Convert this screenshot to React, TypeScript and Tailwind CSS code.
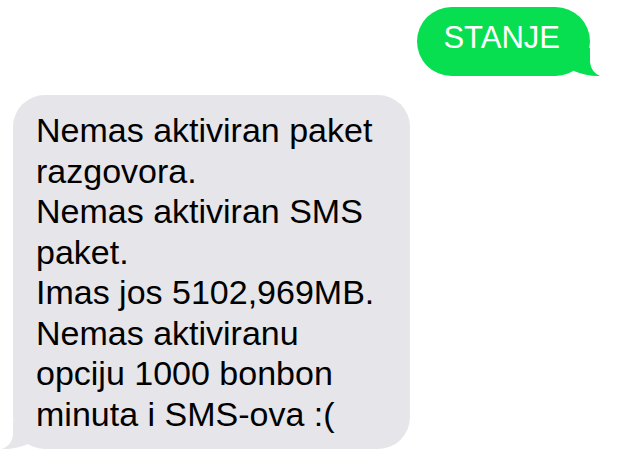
export default function App() {
  return (
    <div
      className="w-[620px] h-[468px] bg-white overflow-hidden flex flex-col pt-[7px]"
      style={{ fontFamily: '"Liberation Sans", Arial, sans-serif' }}
    >
      {/* Sent message */}
      <div className="flex justify-end pr-[30px]">
        <div className="relative">
          <div className="relative z-10 bg-[#07df50] text-white rounded-[35px] pl-[26px] pr-[30px] pt-[13px] pb-[20px] text-[31px] leading-[36px]">
            STANJE
          </div>
          <svg
            className="absolute right-[-10px] bottom-0 overflow-visible"
            width="30"
            height="28"
            viewBox="0 0 30 28"
          >
            <path d="M4 0 L20 0 L20 14 Q21 24 30 28 Q17 28.5 4 23 Z" fill="#07df50" />
          </svg>
        </div>
      </div>

      {/* Received message */}
      <div className="flex justify-start pl-[13px] mt-[19px]">
        <div className="relative">
          <div className="relative z-10 w-[397px] bg-[#e5e5ea] text-black rounded-[32px] pl-[23px] pr-[26px] pt-[15px] pb-[15px] text-[34px] leading-[40.5px]">
            Nemas aktiviran paket razgovora.
            <br />
            Nemas aktiviran SMS paket.
            <br />
            Imas jos 5102,969MB.
            <br />
            Nemas aktiviranu opciju 1000 bonbon minuta i SMS-ova :(
          </div>
          <svg
            className="absolute left-[-11px] bottom-0 overflow-visible"
            width="30"
            height="28"
            viewBox="0 0 30 28"
          >
            <path d="M26 0 L11 0 L11 14 Q10 24 0 28 Q13 28.5 26 23 Z" fill="#e5e5ea" />
          </svg>
        </div>
      </div>
    </div>
  )
}
